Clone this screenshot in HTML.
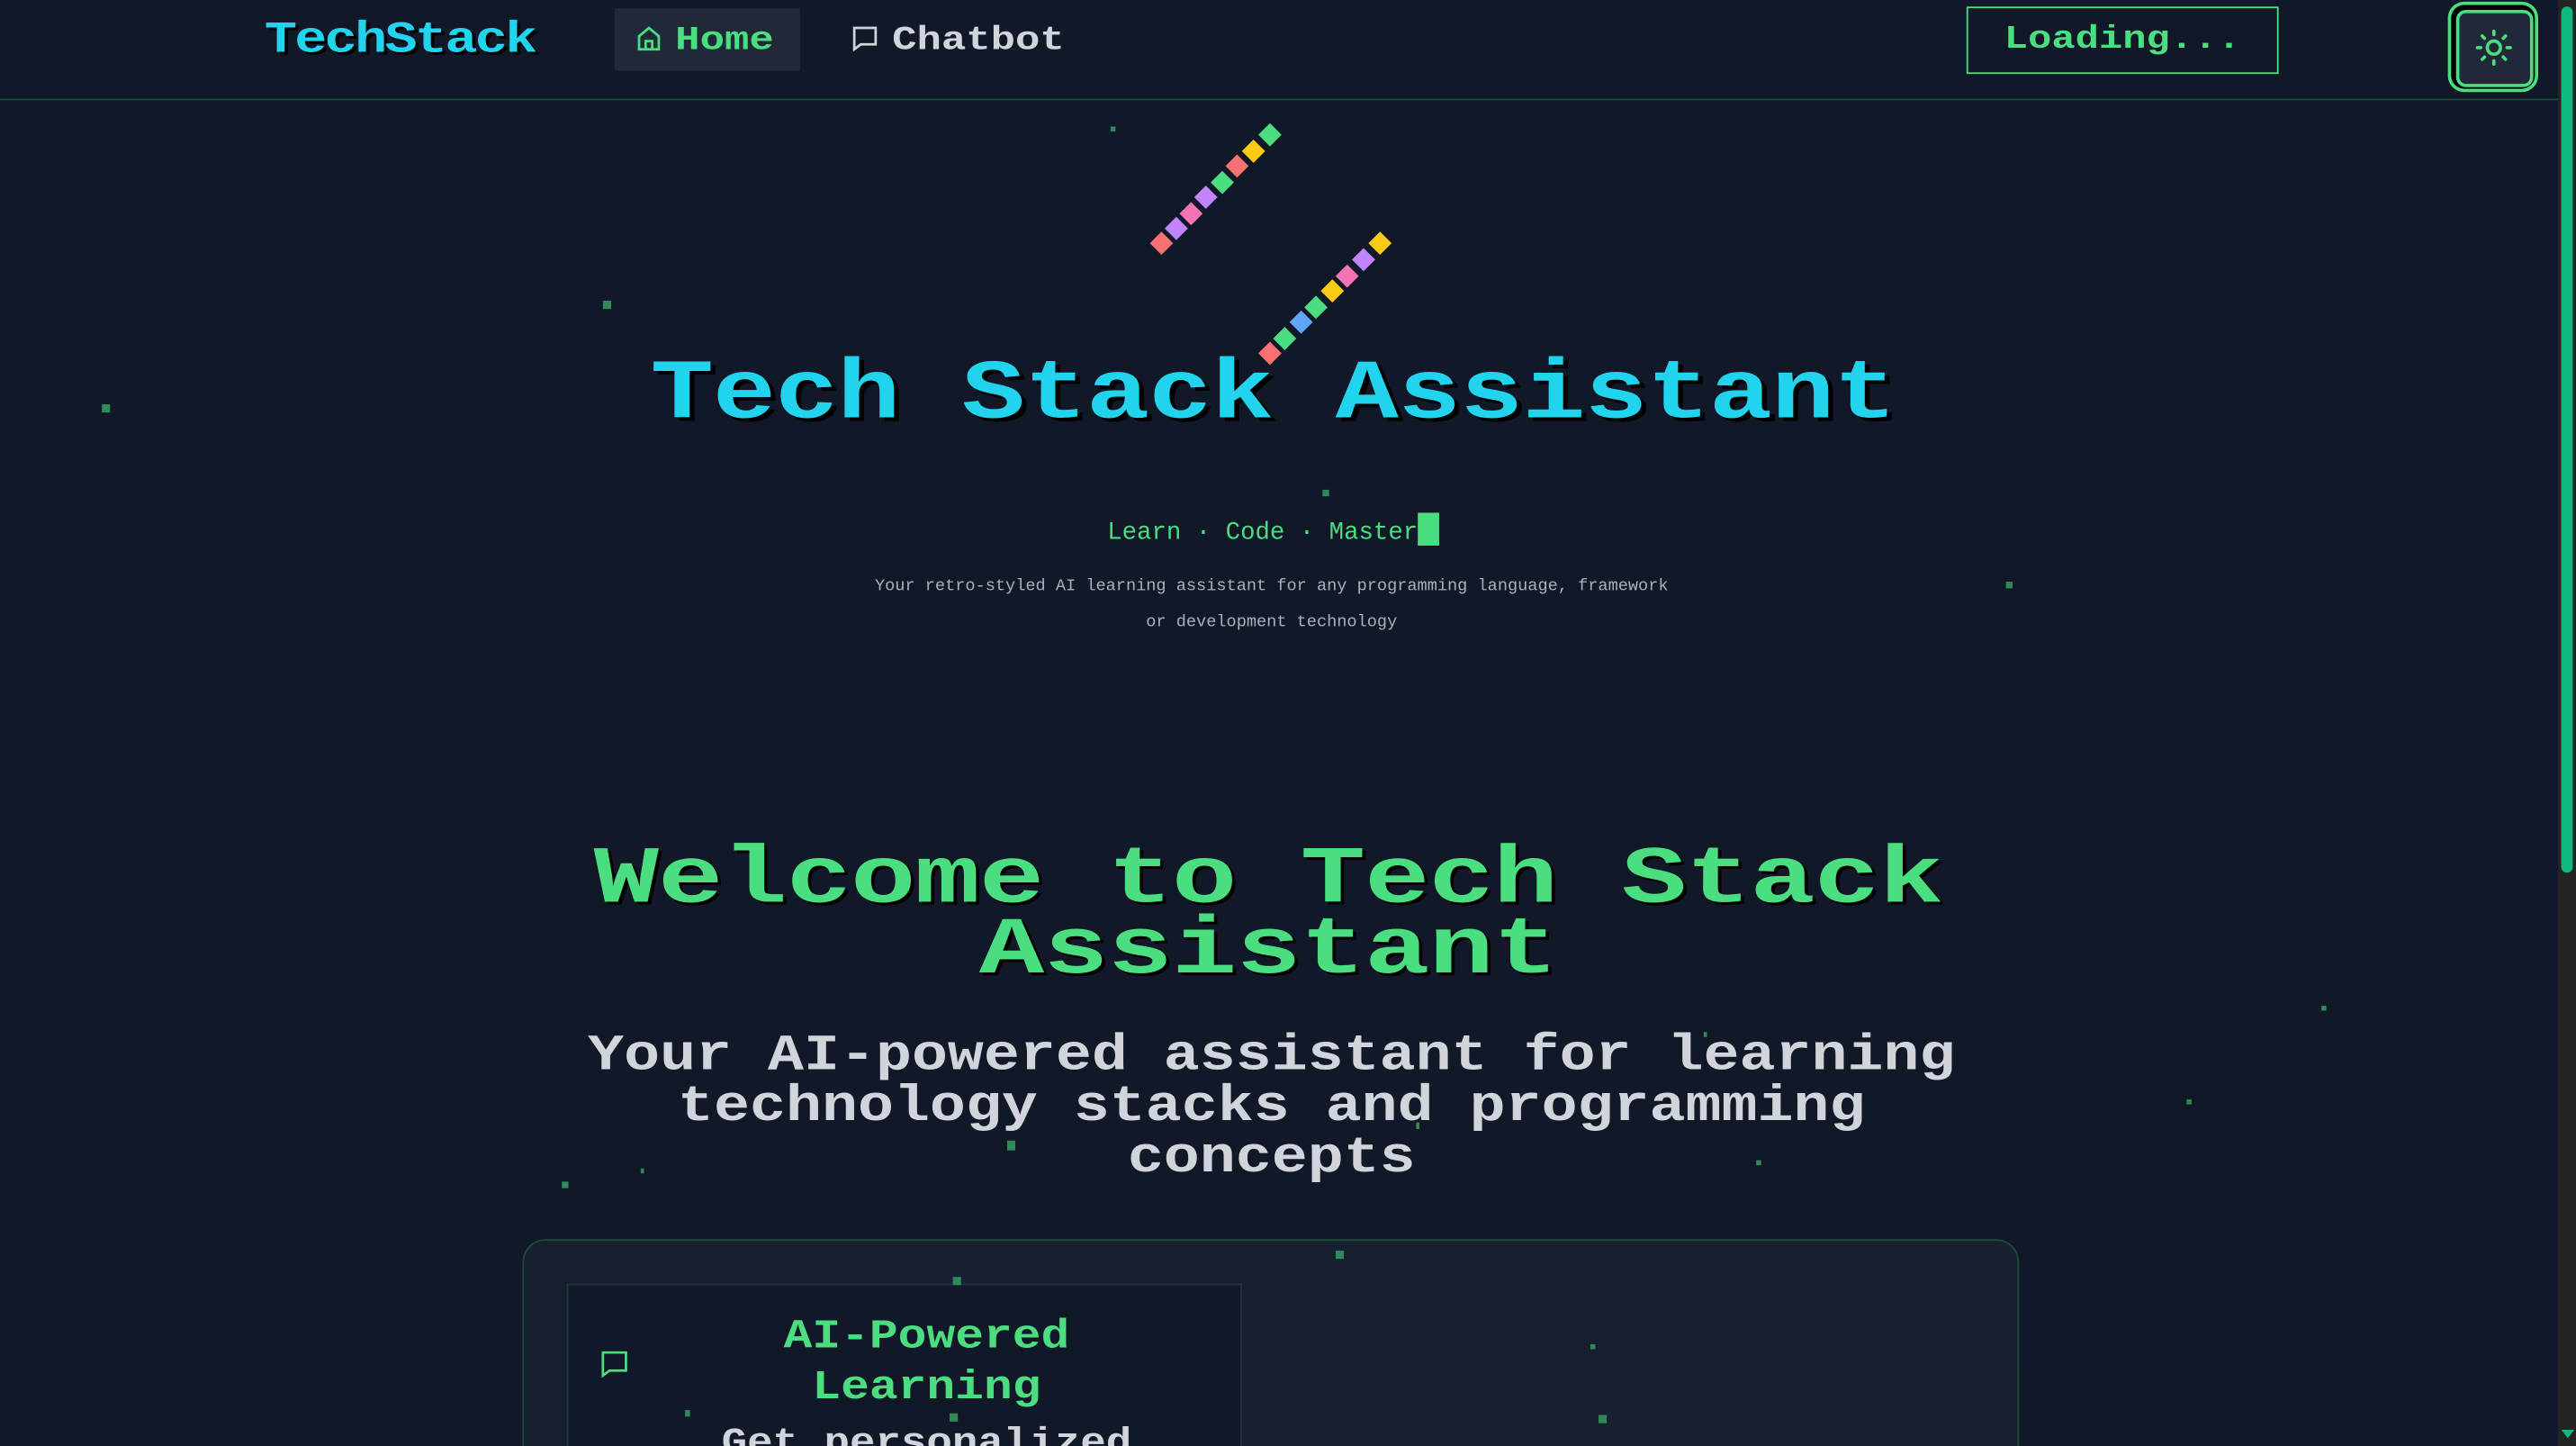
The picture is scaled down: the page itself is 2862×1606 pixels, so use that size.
<!DOCTYPE html>
<html><head><meta charset="utf-8"><style>
html,body{margin:0;padding:0;background:#111827;overflow:hidden;width:2862px;height:1606px}
#w{position:absolute;left:0;top:0;width:1568px;height:880px;overflow:hidden;transform:scale(1.82526);transform-origin:0 0;background:#111827;font-family:"Liberation Mono",monospace;font-weight:bold}
.a{position:absolute;white-space:nowrap}
.c{position:absolute;text-align:center;white-space:nowrap}
.d{position:absolute;width:10px;height:10px;transform:rotate(45deg)}
.s{position:absolute;width:3px;height:4px;background:#2f8a5a}
.sy{transform:scaleY(0.82);transform-origin:50% 50%}
.wl{position:absolute;left:0;width:1544px;text-align:center;white-space:nowrap;font-size:66px;line-height:60px;height:60px;color:#4ade80;text-shadow:2px 2px 0 #000;letter-spacing:-0.5px;transform:scaleY(0.75)}
.sl{position:absolute;left:0;width:1548px;text-align:center;white-space:nowrap;font-size:36.5px;line-height:40px;height:40px;color:#d1d5db;transform:scaleY(0.85)}
.cl{position:absolute;left:400px;width:328px;text-align:center;white-space:nowrap;font-size:29px;line-height:34px;height:34px;color:#4ade80;transform:scaleY(0.85)}
</style></head><body><div id="w">
<div class="a" style="left:0;top:60px;width:1558px;height:1px;background:#1d4a38"></div>
<div class="a sy" style="left:161px;top:5px;font-size:33px;line-height:40px;color:#22d3ee;text-shadow:2px 2px 0 #000;letter-spacing:-1.5px">TechStack</div>
<div class="a" style="left:374px;top:5px;width:113px;height:38px;background:#1f2937"></div>
<svg class="a" style="left:387px;top:15px" width="16" height="17" viewBox="0 0 16 17"><path d="M2 7 L8 2 L14 7 V15 H2 Z M6 15 V10 H10 V15" fill="none" stroke="#4ade80" stroke-width="1.5"/></svg>
<div class="a sy" style="left:411px;top:11px;font-size:25px;line-height:28px;color:#4ade80">Home</div>
<svg class="a" style="left:518px;top:15px" width="17" height="17" viewBox="0 0 17 17"><path d="M2 2 H15 V12 H6 L2 15 Z" fill="none" stroke="#d1d5db" stroke-width="1.5"/></svg>
<div class="a sy" style="left:543px;top:11px;font-size:25px;line-height:28px;color:#d1d5db">Chatbot</div>
<div class="a" style="left:1197px;top:4px;width:188px;height:39px;border:1px solid #4ade80"></div>
<div class="c sy" style="left:1197px;top:11px;width:190px;font-size:24px;line-height:28px;color:#4ade80">Loading...</div>
<div class="a" style="left:1490px;top:1px;width:51px;height:51px;border:2px solid #4ade80;border-radius:10px;background:#000"></div>
<div class="a" style="left:1495px;top:6px;width:43px;height:43px;border:2px solid #4ade80;border-radius:6px;background:#1f2937"></div>
<svg class="a" style="left:1506px;top:17px" width="24" height="24" viewBox="0 0 24 24" fill="none" stroke="#4ade80" stroke-width="2" stroke-linecap="round"><circle cx="12" cy="12" r="4"/><path d="M12 2v2M12 20v2M4.9 4.9l1.4 1.4M17.7 17.7l1.4 1.4M2 12h2M20 12h2M6.3 17.7l-1.4 1.4M19.1 4.9l-1.4 1.4"/></svg>
<div class="a" style="left:1557px;top:0;width:11px;height:880px;background:#242424"></div>
<div class="a" style="left:1559px;top:4px;width:7px;height:527px;background:#10b981;border-radius:4px"></div>
<div class="a" style="left:1559px;top:870px;width:0;height:0;border-left:4px solid transparent;border-right:4px solid transparent;border-top:5px solid #10b981"></div>

<div class="d" style="left:702px;top:143px;background:#f87171"></div>
<div class="d" style="left:711px;top:134px;background:#c084fc"></div>
<div class="d" style="left:720px;top:125px;background:#f472b6"></div>
<div class="d" style="left:729px;top:115px;background:#c084fc"></div>
<div class="d" style="left:739px;top:106px;background:#4ade80"></div>
<div class="d" style="left:748px;top:96px;background:#f87171"></div>
<div class="d" style="left:758px;top:87px;background:#facc15"></div>
<div class="d" style="left:768px;top:77px;background:#4ade80"></div>
<div class="d" style="left:768px;top:210px;background:#f87171"></div>
<div class="d" style="left:777px;top:201px;background:#4ade80"></div>
<div class="d" style="left:787px;top:191px;background:#60a5fa"></div>
<div class="d" style="left:796px;top:182px;background:#4ade80"></div>
<div class="d" style="left:806px;top:172px;background:#facc15"></div>
<div class="d" style="left:815px;top:163px;background:#f472b6"></div>
<div class="d" style="left:825px;top:153px;background:#c084fc"></div>
<div class="d" style="left:835px;top:143px;background:#facc15"></div>

<div class="c" style="left:0;width:1550px;top:206px;font-size:64px;line-height:70px;color:#22d3ee;text-shadow:3px 3px 0 #000;letter-spacing:-0.5px;transform:scaleY(0.8)">Tech Stack Assistant</div>
<div class="c" style="left:0;width:1550px;top:312px;font-size:15px;line-height:20px;color:#4ade80;font-weight:normal">Learn · Code · Master<span style="display:inline-block;width:13px;height:20px;background:#4ade80;vertical-align:-4px"></span></div>
<div class="c" style="left:0;width:1548px;top:347px;font-size:10.2px;line-height:22px;color:#aab0bb;font-weight:normal">Your retro-styled AI learning assistant for any programming language, framework<br>or development technology</div>

<div class="wl" style="top:506px">Welcome to Tech Stack</div>
<div class="wl" style="top:549px">Assistant</div>
<div class="sl" style="top:623px">Your AI-powered assistant for learning</div>
<div class="sl" style="top:654px">technology stacks and programming</div>
<div class="sl" style="top:685px">concepts</div>

<div class="a" style="left:318px;top:754px;width:909px;height:160px;border:1px solid #1f4a3a;border-radius:14px;background:#172030"></div>
<div class="a" style="left:345px;top:781px;width:409px;height:130px;border:1px solid #1e3a38;background:#111827"></div>
<svg class="a" style="left:365px;top:821px" width="18" height="18" viewBox="0 0 18 18"><path d="M2 2 H16 V13 H6 L2 16 Z" fill="none" stroke="#4ade80" stroke-width="1.5"/></svg>
<div class="cl" style="top:797px">AI-Powered</div>
<div class="cl" style="top:828px">Learning</div>
<div class="c" style="left:400px;width:328px;top:863px;font-size:26px;line-height:30px;color:#d1d5db;transform:scaleY(0.85)">Get personalized</div>

<div class="s" style="left:676px;top:77px;width:3px;height:3px"></div>
<div class="s" style="left:367px;top:183px;width:5px;height:5px"></div>
<div class="s" style="left:62px;top:246px;width:5px;height:5px"></div>
<div class="s" style="left:805px;top:298px;width:4px;height:4px"></div>
<div class="s" style="left:1221px;top:354px;width:4px;height:4px"></div>
<div class="s" style="left:1413px;top:612px;width:3px;height:3px"></div>
<div class="s" style="left:1331px;top:669px;width:3px;height:3px"></div>
<div class="s" style="left:1037px;top:628px;width:2px;height:3px"></div>
<div class="s" style="left:613px;top:694px;width:5px;height:6px"></div>
<div class="s" style="left:342px;top:719px;width:4px;height:4px"></div>
<div class="s" style="left:390px;top:711px;width:2px;height:3px"></div>
<div class="s" style="left:862px;top:683px;width:2px;height:4px"></div>
<div class="s" style="left:1069px;top:706px;width:3px;height:3px"></div>
<div class="s" style="left:813px;top:761px;width:5px;height:5px"></div>
<div class="s" style="left:580px;top:777px;width:5px;height:5px"></div>
<div class="s" style="left:968px;top:818px;width:3px;height:3px"></div>
<div class="s" style="left:973px;top:861px;width:5px;height:5px"></div>
<div class="s" style="left:578px;top:860px;width:5px;height:5px"></div>
<div class="s" style="left:417px;top:858px;width:3px;height:4px"></div>
</div></body></html>
